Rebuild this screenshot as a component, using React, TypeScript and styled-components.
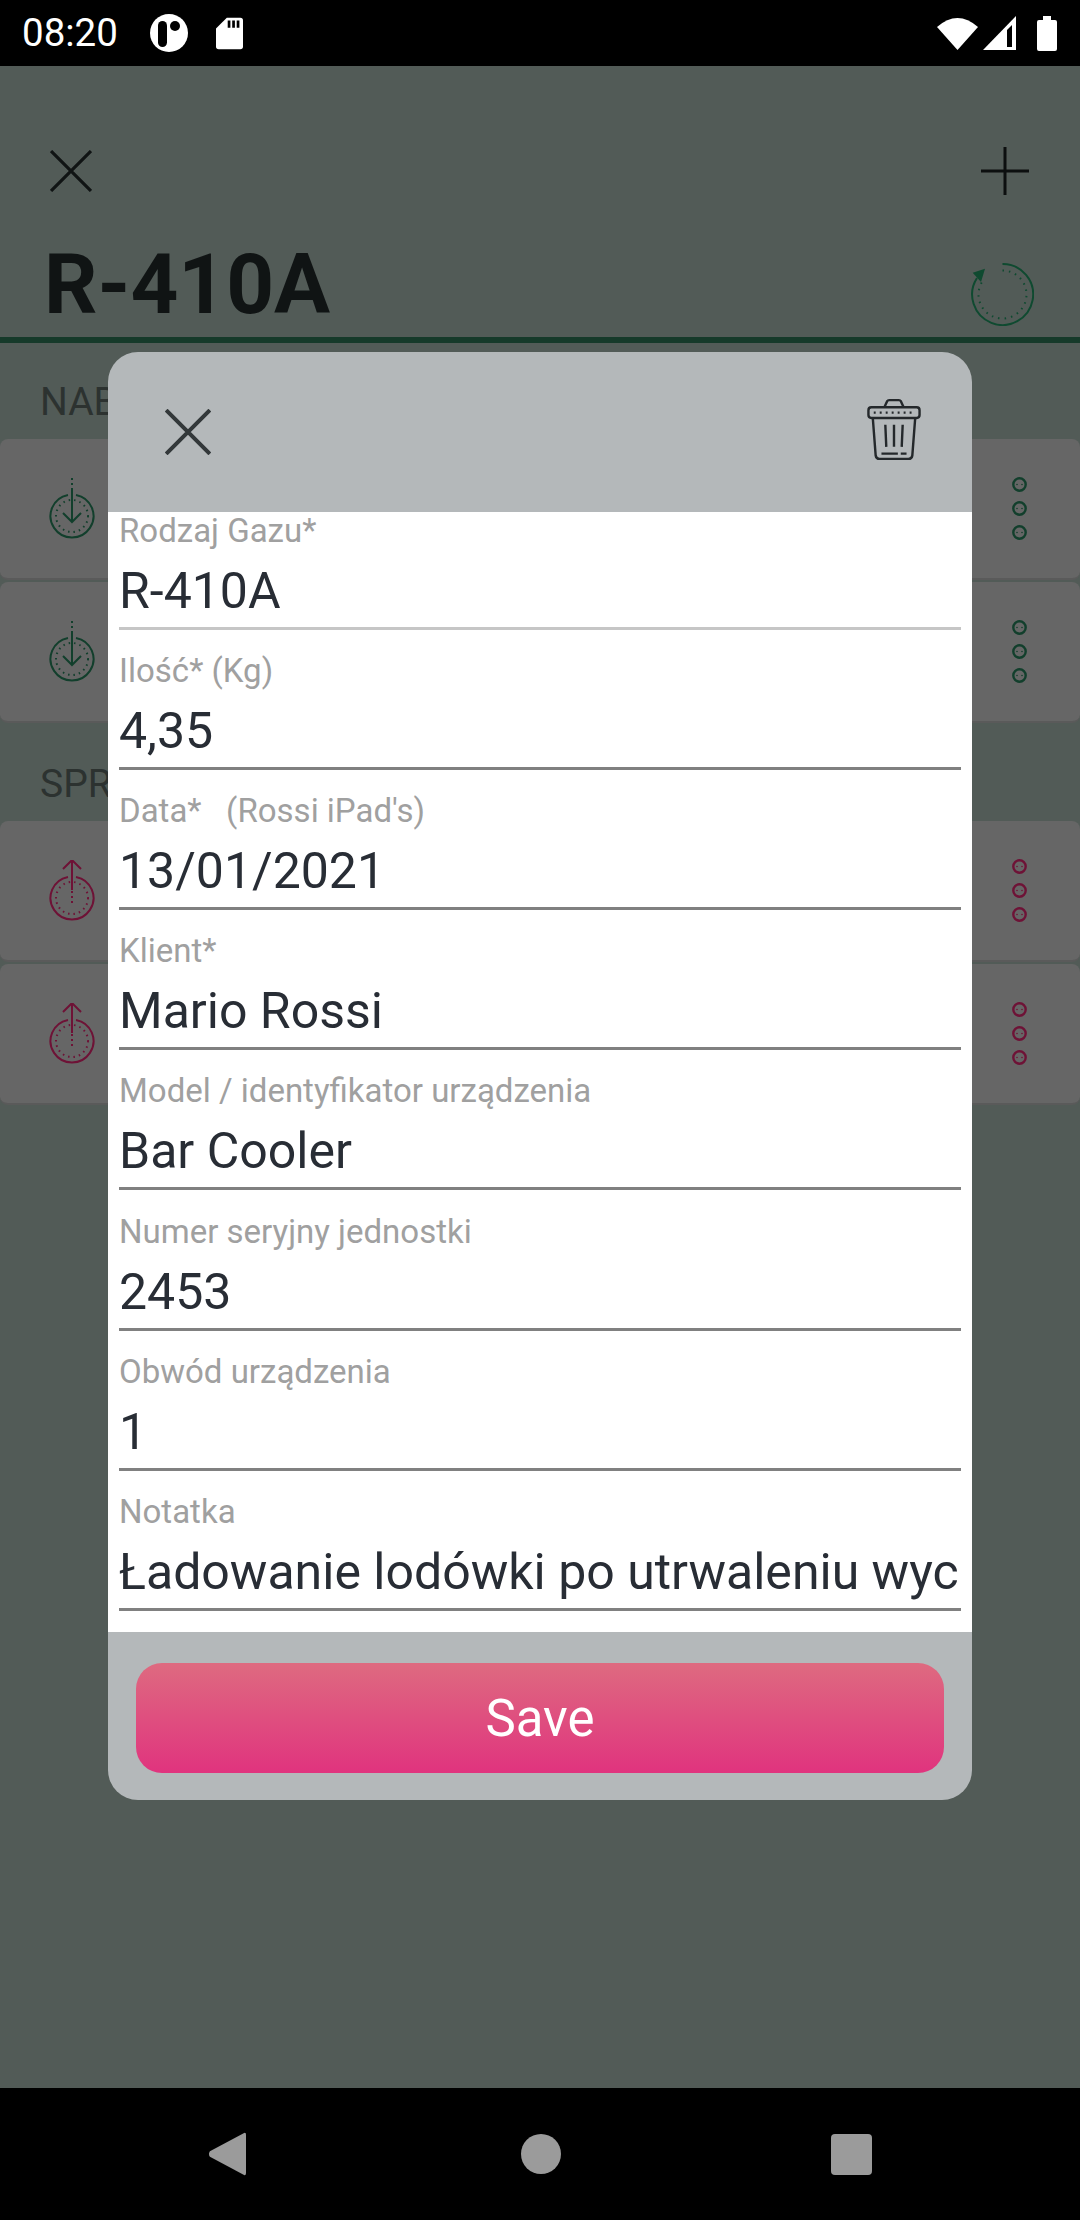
import styled, { createGlobalStyle } from "styled-components";

const GlobalStyle = createGlobalStyle`
  html, body {
    margin: 0;
    padding: 0;
    background: #525b57;
    font-family: Roboto, "Noto Sans", sans-serif;
  }
`;

const Screen = styled.div`
  position: relative;
  width: 1080px;
  height: 2220px;
  display: flex;
  flex-direction: column;
  overflow: hidden;
  background: #525b57;
`;

const StatusBar = styled.div`
  height: 66px;
  flex: none;
  background: #000;
  display: flex;
  align-items: center;
  justify-content: space-between;
  padding: 0 23px 0 22px;
  box-sizing: border-box;
`;

const StatusGroup = styled.div`
  display: flex;
  align-items: center;
`;

const Clock = styled.span`
  color: #fff;
  font-size: 38.5px;
  line-height: 66px;
  margin-right: 32px;
`;

const Page = styled.main`
  flex: 1;
  display: flex;
  flex-direction: column;
`;

const TopBar = styled.div`
  height: 100px;
  margin-top: 55px;
  flex: none;
  display: flex;
  align-items: center;
  justify-content: space-between;
  padding: 0 50px;
`;

const TitleRow = styled.div`
  height: 116px;
  flex: none;
  display: flex;
  align-items: center;
  justify-content: space-between;
  padding: 0 46px 0 44px;
  border-bottom: 6px solid #163a2a;
`;

const Title = styled.h1`
  margin: 11px 0 0;
  font-size: 83.5px;
  line-height: 105px;
  font-weight: 700;
  color: #101414;
`;

const RefreshSlot = styled.div`
  display: flex;
  margin-top: 30px;
`;

const SectionLabel = styled.div`
  height: 96px;
  flex: none;
  box-sizing: border-box;
  padding: 21px 0 0 40px;
  display: flex;
  align-items: center;
  font-size: 39px;
  color: #2c3230;
`;

const Card = styled.div`
  height: 141px;
  flex: none;
  margin-bottom: 2px;
  background: #666;
  border-radius: 8px;
  border-bottom: 2px solid #5a5a5a;
  box-sizing: border-box;
  display: flex;
  align-items: center;
  justify-content: space-between;
  padding: 0 53px 0 48px;
`;

const Dots = styled.div`
  display: flex;
  flex-direction: column;
  gap: 9px;
`;

const NavBar = styled.div`
  height: 132px;
  flex: none;
  background: #000;
  display: flex;
  align-items: center;
  justify-content: center;
  gap: 270px;
`;

const BackSlot = styled.div`
  display: flex;
  margin-right: 5px;
`;

const Modal = styled.section`
  position: absolute;
  left: 108px;
  top: 352px;
  width: 864px;
  height: 1448px;
  border-radius: 30px;
  overflow: hidden;
  background: #b4b8ba;
  display: flex;
  flex-direction: column;
`;

const ModalHeader = styled.header`
  height: 160px;
  flex: none;
  display: flex;
  align-items: center;
  justify-content: space-between;
  padding: 0 51px 0 57px;
`;

const TrashSlot = styled.div`
  display: flex;
  margin-bottom: 5px;
`;

const ModalBody = styled.div`
  height: 1120px;
  flex: none;
  background: #fff;
  overflow: hidden;
  padding: 0 11px;
  box-sizing: border-box;
`;

const Field = styled.div<{ $first?: boolean }>`
  height: 140.1px;
  margin-top: ${(p) => (p.$first ? "-22px" : "0")};
  box-sizing: border-box;
  display: flex;
  flex-direction: column;
  justify-content: flex-end;
`;

const FieldLabel = styled.div`
  font-size: 33px;
  line-height: 38px;
  color: #a0a0a0;
  white-space: pre;
`;

const FieldValue = styled.div<{ $light?: boolean }>`
  font-size: 50px;
  line-height: 64px;
  height: 68px;
  margin-top: 9px;
  color: #282d35;
  white-space: nowrap;
  overflow: hidden;
  border-bottom: 3px solid ${(p) => (p.$light ? "#c6c6c6" : "#808080")};
`;

const ModalFooter = styled.footer`
  flex: 1;
  padding: 31px 28px 27px;
  box-sizing: border-box;
  display: flex;
`;

const SaveButton = styled.button`
  flex: 1;
  border: none;
  border-radius: 26px;
  background: linear-gradient(180deg, #de6a80 0%, #e0337e 100%);
  color: #fff;
  font-family: Roboto, sans-serif;
  font-size: 51px;
`;

const CloseIcon = ({ size, color, width }: { size: number; color: string; width: number }) => (
  <svg width={size} height={size} viewBox="0 0 40 40">
    <path d="M1 1L39 39M39 1L1 39" stroke={color} strokeWidth={width} fill="none" />
  </svg>
);

const PlusIcon = () => (
  <svg width="50" height="50" viewBox="0 0 50 50">
    <path d="M25 1V49M1 25H49" stroke="#0c0f0f" strokeWidth="3" fill="none" />
  </svg>
);

const RefreshIcon = () => (
  <svg width="63" height="63" viewBox="0 0 63 63" fill="none" stroke="#0f4a30">
    <path d="M31.5 1A30.5 30.5 0 1 1 6 15" strokeWidth="2" />
    <path d="M31.5 7.5A24 24 0 1 1 12 17.5" strokeWidth="2" strokeDasharray="1.5 5" />
    <path d="M14 5.7L1.7 9.7L10 19Z" fill="#0f4a30" stroke="none" />
  </svg>
);

const TrashIcon = () => (
  <svg width="54" height="63" viewBox="0 0 56 64" fill="none" stroke="#24282b" strokeWidth="2.5">
    <path d="M18 9L21 2.5Q21.5 1.5 23 1.5H33Q34.5 1.5 35 2.5L38 9" />
    <rect x="1.5" y="9" width="53" height="11" rx="3" />
    <path d="M6 20L9 59Q9.5 62.5 13 62.5H43Q46.5 62.5 47 59L50 20" />
    <path d="M19 27L20 50M28 27V50M37 27L36 50M15 57H32M35 57H41" />
    <path d="M7 14.5H49" strokeDasharray="2 4.2" />
  </svg>
);

const FlowIcon = ({ up, color }: { up?: boolean; color: string }) => (
  <svg width="48" height="62" viewBox="0 0 48 62" fill="none" stroke={color} strokeWidth="2">
    <path d="M28 16.9A21.5 21.5 0 1 1 20 16.9" />
    <circle cx="24" cy="38" r="16" strokeDasharray="1.5 4" />
    {up ? (
      <>
        <path d="M24 0V30" />
        <path d="M24 31V45" strokeDasharray="2 3" />
        <path d="M15 9L24 0L33 9" />
      </>
    ) : (
      <>
        <path d="M24 0V12" strokeDasharray="2 3" />
        <path d="M24 12V44" />
        <path d="M15 35L24 44L33 35" />
      </>
    )}
  </svg>
);

const MenuDot = ({ color }: { color: string }) => (
  <svg width="15" height="15" viewBox="0 0 15 15" style={{ display: "block" }}>
    <circle cx="7.5" cy="7.5" r="6.2" fill="none" stroke={color} strokeWidth="2.4" />
    <circle cx="5" cy="7.5" r="0.8" fill={color} />
    <circle cx="10" cy="7.5" r="0.8" fill={color} />
  </svg>
);

const RecordCard = ({ color, up }: { color: string; up?: boolean }) => (
  <Card>
    <FlowIcon up={up} color={color} />
    <Dots>
      <MenuDot color={color} />
      <MenuDot color={color} />
      <MenuDot color={color} />
    </Dots>
  </Card>
);

const fields = [
  { label: "Rodzaj Gazu*", value: "R-410A" },
  { label: "Ilość* (Kg)", value: "4,35" },
  { label: "Data*   (Rossi iPad's)", value: "13/01/2021" },
  { label: "Klient*", value: "Mario Rossi" },
  { label: "Model / identyfikator urządzenia", value: "Bar Cooler" },
  { label: "Numer seryjny jednostki", value: "2453" },
  { label: "Obwód urządzenia", value: "1" },
  { label: "Notatka", value: "Ładowanie lodówki po utrwaleniu wyc" },
];

const GREEN = "#123f2c";
const RED = "#6e1236";

export default function App() {
  return (
    <Screen>
      <GlobalStyle />
      <StatusBar>
        <StatusGroup>
          <Clock>08:20</Clock>
          <svg width="38" height="38" viewBox="0 0 38 38">
            <circle cx="19" cy="19" r="19" fill="#fff" />
            <rect x="8" y="7" width="9" height="26" rx="4.5" fill="#000" />
            <circle cx="25" cy="12" r="5" fill="#000" />
          </svg>
          <svg width="27" height="33" viewBox="0 0 30 35" style={{ marginLeft: 28 }}>
            <path d="M12 0H27Q30 0 30 3V32Q30 35 27 35H3Q0 35 0 32V12Z" fill="#fff" />
            <path d="M13 3H16V11H13ZM18 3H21V11H18ZM23 3H26V11H23Z" fill="#000" />
          </svg>
        </StatusGroup>
        <StatusGroup>
          <svg width="41" height="34" viewBox="0 0 41 34">
            <path d="M0 11Q20.5 -7 41 11L20.5 34Z" fill="#fff" />
          </svg>
          <svg width="33" height="34" viewBox="0 0 33 34" style={{ marginLeft: 5 }}>
            <path d="M0 34L33 0V34Z" fill="#fff" />
            <path d="M24 14L29 9V31H24Z" fill="#000" />
          </svg>
          <svg width="20" height="35" viewBox="0 0 20 35" style={{ marginLeft: 21 }}>
            <path d="M6 0H14V4H18Q20 4 20 6V33Q20 35 18 35H2Q0 35 0 33V6Q0 4 2 4H6Z" fill="#fff" />
          </svg>
        </StatusGroup>
      </StatusBar>

      <Page>
        <TopBar>
          <CloseIcon size={42} color="#101414" width={3} />
          <PlusIcon />
        </TopBar>
        <TitleRow>
          <Title>R-410A</Title>
          <RefreshSlot>
            <RefreshIcon />
          </RefreshSlot>
        </TitleRow>
        <SectionLabel>NAB</SectionLabel>
        <RecordCard color={GREEN} />
        <RecordCard color={GREEN} />
        <SectionLabel>SPR</SectionLabel>
        <RecordCard color={RED} up />
        <RecordCard color={RED} up />
      </Page>

      <NavBar>
        <BackSlot>
          <svg width="38" height="46" viewBox="0 0 40 46">
            <path d="M38 1Q40 0 40 3V43Q40 46 38 45L2 26Q0 23 2 20Z" fill="#9b9b9b" />
          </svg>
        </BackSlot>
        <svg width="40" height="40" viewBox="0 0 40 40">
          <circle cx="20" cy="20" r="20" fill="#9b9b9b" />
        </svg>
        <svg width="41" height="41" viewBox="0 0 41 41">
          <rect width="41" height="41" rx="4" fill="#9b9b9b" />
        </svg>
      </NavBar>

      <Modal>
        <ModalHeader>
          <CloseIcon size={46} color="#33383a" width={3.5} />
          <TrashSlot>
            <TrashIcon />
          </TrashSlot>
        </ModalHeader>
        <ModalBody>
          {fields.map((f, i) => (
            <Field key={f.label} $first={i === 0}>
              <FieldLabel>{f.label}</FieldLabel>
              <FieldValue $light={i === 0}>{f.value}</FieldValue>
            </Field>
          ))}
        </ModalBody>
        <ModalFooter>
          <SaveButton>Save</SaveButton>
        </ModalFooter>
      </Modal>
    </Screen>
  );
}
